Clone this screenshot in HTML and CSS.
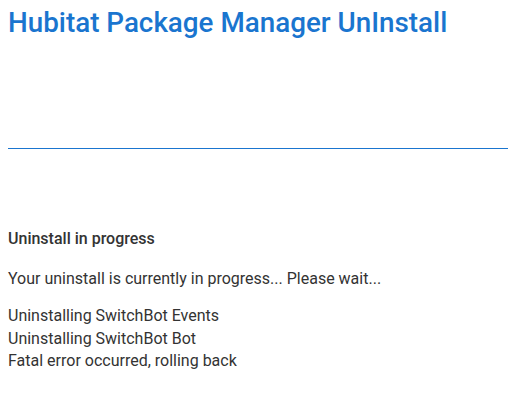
FILE: index.html
```html
<!DOCTYPE html>
<html>
<head>
<meta charset="utf-8">
<link rel="stylesheet" href="styles.css">
</head>
<body>
<header class="head">
  <h1 class="title">Hubitat Package Manager UnInstall</h1>
</header>
<div class="rule"></div>
<section class="content">
  <div class="heading">Uninstall in progress</div>
  <p class="msg">Your uninstall is currently in progress... Please wait...</p>
  <div class="log">
    <div>Uninstalling SwitchBot Events</div>
    <div>Uninstalling SwitchBot Bot</div>
    <div>Fatal error occurred, rolling back</div>
  </div>
</section>
</body>
</html>
```
FILE: styles.css
```css
html, body {
  margin: 0;
  padding: 0;
  background: #fff;
}
body {
  padding: 0 0 0 8px;
  font-family: Roboto, "Liberation Sans", sans-serif;
  color: #333;
}
.head {
  height: 148px;
}
.title {
  margin: 0;
  padding-top: 6px;
  font-size: 27.8px;
  font-weight: 500;
  line-height: 34px;
  color: #1a75cf;
}
.rule {
  height: 1px;
  background: #1a75cf;
}
.content {
  padding-top: 79px;
  font-size: 16px;
  line-height: 22.5px;
}
.heading {
  font-weight: 500;
}
.msg {
  margin: 17px 0 15px;
}
```
